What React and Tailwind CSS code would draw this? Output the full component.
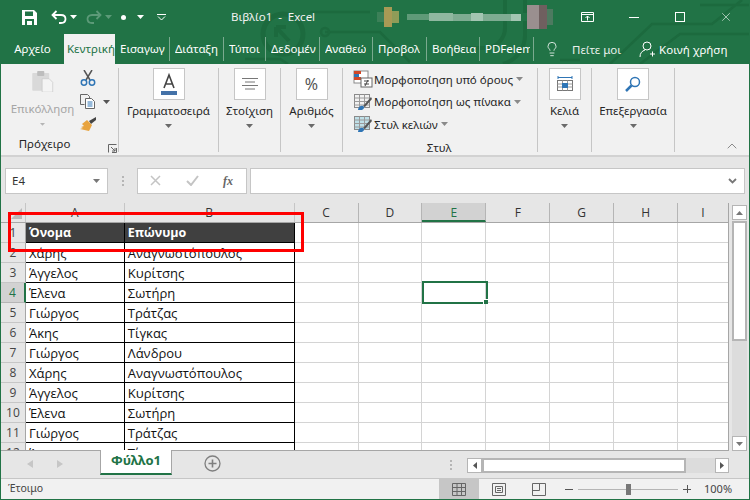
import React from "react";
import { ChevronUp, Lightbulb, X } from "lucide-react";

const rows = [
  ["Όνομα", "Επώνυμο"],
  ["Χάρης", "Αναγνωστόπουλος"],
  ["Άγγελος", "Κυρίτσης"],
  ["Έλενα", "Σωτήρη"],
  ["Γιώργος", "Τράτζας"],
  ["Άκης", "Τίγκας"],
  ["Γιώργος", "Λάνδρου"],
  ["Χάρης", "Αναγνωστόπουλος"],
  ["Άγγελος", "Κυρίτσης"],
  ["Έλενα", "Σωτήρη"],
  ["Γιώργος", "Τράτζας"],
  ["Άκης", "Τίγκας"],
];

const tabs = [
  ["Εισαγωγ", "w-[55px]"],
  ["Διάταξη", "w-[54px]"],
  ["Τύποι", "w-[42px]"],
  ["Δεδομέν", "w-[54px]"],
  ["Αναθεώ", "w-[53px]"],
  ["Προβολ", "w-[54px]"],
  ["Βοήθεια", "w-[53px]"],
  ["PDFelem", "w-[54px]"],
];

const emptyCols = [
  ["C", "w-[64px]"],
  ["D", "w-[64px]"],
  ["E", "w-[64px]"],
  ["F", "w-[64px]"],
  ["G", "w-[64px]"],
  ["H", "w-[64px]"],
  ["I", "w-[50px]"],
];

const mosaic = [
  ["w-[7px] h-[10px]", "bg-[#3c8058]"],
  ["w-[8px] h-[20px]", "bg-[#a89a55]"],
  ["w-[7px] h-[12px]", "bg-[#8f9c58]"],
  ["w-[8px] h-[8px]", "bg-[#217346]"],
  ["w-[22px] h-[6px]", "bg-[#5f9a78]"],
  ["w-[24px] h-[8px]", "bg-[#8fb8a0]"],
  ["w-[18px] h-[7px]", "bg-[#7eac92]"],
  ["w-[12px] h-[8px]", "bg-[#a3c5b2]"],
  ["w-[28px] h-[7px]", "bg-[#7eac92]"],
  ["w-[10px] h-[7px]", "bg-[#a3c5b2]"],
  ["w-[6px] h-[8px]", "bg-[#217346]"],
  ["w-[12px] h-[24px]", "bg-[#9a8f8f]"],
  ["w-[8px] h-[24px]", "bg-[#6f5f5f]"],
  ["w-[6px] h-[16px]", "bg-[#4d7a60]"],
];

const Caret = ({ className = "", color = "#6a6a6a" }) => (
  <svg width="7" height="4" viewBox="0 0 7 4" className={className}>
    <path d="M0 0h7L3.5 4z" fill={color} />
  </svg>
);

const Circuit = () => (
  <svg className="absolute left-0 top-0 pointer-events-none" width="750" height="64" viewBox="0 0 750 64" fill="none" stroke="#1c6a3e" strokeWidth="2.5">
    <circle cx="283" cy="34" r="20" strokeWidth="5" />
    <path d="M276 27l13 14M276 27h10M276 27v10" strokeWidth="4" />
    <path d="M245 59h35l8 5M310 12h60M325 32h55l30 30" />
    <circle cx="325" cy="32" r="4" />
    <path d="M505 0v28a20 20 0 0 1-20 20h-20M525 0v34a30 30 0 0 1-22 30" strokeWidth="4" />
    <path d="M610 64l42-40h60l30-24M640 64l40-30h70M700 5h50M560 60h20" />
  </svg>
);

const BigBtn = ({ children }) => (
  <div className="w-[32px] h-[32px] bg-white border border-[#c6c6c6] flex items-center justify-center">{children}</div>
);

const RibbonGroup = ({ width, label, children }) => (
  <div className={`${width} h-[84px] border-r border-[#c6c6c6] flex flex-col items-center shrink-0`}>
    <BigBtn>{children}</BigBtn>
    <span className="text-[#262626] mt-[3px] leading-[16px]">{label}</span>
    <Caret className="mt-[5px]" />
  </div>
);

const StyleRow = ({ children, label }) => (
  <div className="flex items-center h-[22.5px] shrink-0">
    <span className="w-[20px] h-[18px] mr-[1px] shrink-0">{children}</span>
    <span className="text-[#262626] whitespace-nowrap">{label}</span>
    <Caret className="ml-[3px]" color="#8a8a8a" />
  </div>
);

const GridIcon = ({ fill = "none" }) => (
  <svg width="20" height="18" viewBox="0 0 20 18">
    <rect x="1.5" y="1.5" width="15" height="13" fill={fill} stroke="#8a8a8a" />
    <path d="M1.5 5h15M1.5 8.5h15M1.5 12h15M6.500 1.500v13M11.500 1.500v13" stroke="#9a9a9a" />
    <path d="M18 4l-7 8-1 1 2 1 7-8z" fill="#555" />
    <path d="M5 17c0-3 3-5 5-4 2 1 1 3-1 4z" fill="#2f75b5" />
  </svg>
);

export default function App() {
  return (
    <div className="relative w-[750px] h-[500px] overflow-hidden flex flex-col bg-[#e6e6e6] border-x border-b border-[#217346] font-['Noto_Sans',sans-serif] text-[11.5px]">
      {/* title bar + tabs */}
      <div className="relative -mx-px h-[64px] bg-[#217346] shrink-0 text-white">
        <Circuit />
        <div className="relative h-[34px] flex items-center">
          <svg width="15" height="15" viewBox="0 0 15 15" className="ml-[22px]">
            <path d="M0 0h12l3 3v12H0z" fill="#fff" />
            <rect x="3" y="1.500" width="8" height="4.500" fill="#217346" />
            <rect x="3" y="9" width="9" height="6" fill="#217346" />
            <rect x="5" y="11" width="5" height="4" fill="#fff" />
          </svg>
          <svg width="16" height="14" viewBox="0 0 16 14" fill="none" stroke="#fff" strokeWidth="1.800" className="ml-[14px]">
            <path d="M5.500 1L1.500 5l4 4M1.500 5H10c6 0 6 8 0 8H8" />
          </svg>
          <Caret className="ml-[3px]" color="#fff" />
          <svg width="16" height="14" viewBox="0 0 16 14" fill="none" stroke="#5c9a78" strokeWidth="1.800" className="ml-[9px]">
            <path d="M10.500 1l4 4-4 4M14.500 5H6c-6 0-6 8 0 8h2" />
          </svg>
          <Caret className="ml-[3px]" color="#5c9a78" />
          <span className="w-[5px] h-[5px] rounded-full bg-white ml-[9px]" />
          <Caret className="ml-[11px]" color="#fff" />
          <svg width="9" height="7" viewBox="0 0 9 7" fill="none" stroke="#fff" className="ml-[13px]">
            <path d="M0 .5h9" />
            <path d="M1 2.500l3.500 3.500 3.500-3.500" />
          </svg>
          <span className="ml-[65px] w-[82px] whitespace-pre text-[#f2f2f2]">Βιβλίο1  -  Excel</span>
          <div className="ml-[64px] flex items-center">
            {mosaic.map(([size, color], i) => (
              <span key={i} className={`${size} ${color}`} />
            ))}
          </div>
          <svg width="14" height="11" viewBox="0 0 14 11" fill="none" stroke="#fff" className="ml-[28px]">
            <path d="M.5 .5h12v9H.500zM.5 2.500h12M6.500 8.500V4M4.500 6l2-2 2 2" />
          </svg>
          <span className="w-[10px] h-px bg-white ml-[34px]" />
          <span className="w-[10px] h-[10px] border border-white ml-[36px]" />
          <X size={14} strokeWidth={1} className="ml-[34px]" />
        </div>
        <div className="relative h-[30px] flex items-end pl-[1px]">
          <div className="w-[63px] h-[30px] flex items-center justify-center">Αρχείο</div>
          <div className="w-[51px] h-[30px] bg-[#f1f1f1] text-[#217346] flex items-center pl-[3px] overflow-hidden whitespace-nowrap">Κεντρική</div>
          {tabs.map(([name, width]) => (
            <div key={name} className={`${width} h-[24px] mb-[3px] border-r border-[#7aaa8f] flex items-center pl-[5px] pr-[3px] whitespace-nowrap`}>
              <span className="min-w-0 overflow-hidden">{name}</span>
            </div>
          ))}
          <Lightbulb size={16} strokeWidth={1.200} className="ml-[10px] mb-[7px]" />
          <span className="ml-[12px] mb-[6px] text-[#e8f0eb]">Πείτε μοι</span>
          <svg width="16" height="17" viewBox="0 0 16 17" fill="none" stroke="#fff" className="ml-[18px] mb-[6px]">
            <circle cx="8" cy="5" r="4" />
            <path d="M1 16c0-4 2-6 5-7M11 13h5M13.500 10.500v5" />
          </svg>
          <span className="ml-[4px] mb-[6px] whitespace-nowrap">Κοινή χρήση</span>
        </div>
      </div>

      {/* ribbon */}
      <div className="relative h-[93px] shrink-0 bg-[#f1f1f1] border-b-2 border-[#d2d2d2] flex pt-[4px]">
        <div className="w-[118px] h-[84px] border-r border-[#c6c6c6] relative shrink-0 flex">
          <div className="w-[76px] flex flex-col items-center pt-[3px] pl-[7px]">
            <svg width="29" height="30" viewBox="0 0 29 30">
              <rect x="0" y="3" width="24" height="25" rx="1" fill="#d9d9d9" />
              <rect x="7" y="0" width="10" height="7" rx="1" fill="#bdbdbd" />
              <path d="M14 11h10l5 5v14H14z" fill="#f4f4f4" stroke="#c8c8c8" />
            </svg>
            <span className="text-[#a6a6a6] mt-[9px] leading-[16px]">Επικόλληση</span>
            <Caret className="mt-[6px]" color="#b5b5b5" />
            <span className="text-[#262626] mt-[10px] leading-[16px] pl-[4px] whitespace-nowrap">Πρόχειρο</span>
          </div>
          <div className="flex flex-col pt-[2px] pl-[3px]">
            <svg width="16" height="16" viewBox="0 0 16 16" fill="none">
              <path d="M4 0l6 10M12 0L6 10" stroke="#555" strokeWidth="1.500" />
              <circle cx="4" cy="12.500" r="2.700" stroke="#2f75b5" strokeWidth="1.500" />
              <circle cx="12" cy="12.500" r="2.700" stroke="#2f75b5" strokeWidth="1.500" />
            </svg>
            <div className="flex items-center mt-[8px]">
              <svg width="16" height="15" viewBox="0 0 16 15" fill="none">
                <path d="M.5 .5h7l2 2v3M.5 .5v10h4" stroke="#666" />
                <path d="M5.500 4.500h6l3 3v7h-9z" fill="#fff" stroke="#666" />
                <path d="M7.500 8h5M7.500 10h5M7.500 12h5" stroke="#2f75b5" />
              </svg>
              <Caret className="ml-[7px]" color="#555" />
            </div>
            <svg width="16" height="15" viewBox="0 0 16 15" className="mt-[8px]">
              <path d="M9 4l7-4v3l-5 4z" fill="#444" />
              <path d="M7 3l5 5-3 6-9-2 3-1-2-1 3-1-2-2z" fill="#e8a33d" />
            </svg>
          </div>
          <svg width="9" height="9" viewBox="0 0 9 9" fill="none" stroke="#666" className="absolute left-[107px] top-[76px]">
            <path d="M.5 8.500v-8h8M8.500 4v4.500H4M3 3l4 4M7 4v3H4" />
          </svg>
        </div>

        <RibbonGroup width="w-[100px]" label="Γραμματοσειρά">
          <svg width="18" height="24" viewBox="0 0 18 24">
            <rect x="1" y="19" width="16" height="4" fill="#4472a8" />
            <path d="M4 16L9 3l5 13M5.500 12h7" fill="none" stroke="#444" strokeWidth="1.600" />
          </svg>
        </RibbonGroup>
        <RibbonGroup width="w-[62px]" label="Στοίχιση">
          <svg width="16" height="12" viewBox="0 0 16 12" stroke="#777">
            <path d="M0 .5h16M3 4h10M0 7.500h16M3 11h10" />
          </svg>
        </RibbonGroup>
        <RibbonGroup width="w-[62px]" label="Αριθμός">
          <span className="text-[16px] text-[#555] leading-none">%</span>
        </RibbonGroup>

        <div className="w-[195px] h-[84px] border-r border-[#c6c6c6] shrink-0 flex flex-col pl-[10px]">
          <StyleRow label="Μορφοποίηση υπό όρους">
            <svg width="20" height="18" viewBox="0 0 20 18">
              <rect x="1" y="1" width="14" height="12" fill="#fff" stroke="#8a8a8a" />
              <rect x="1" y="1" width="7" height="3" fill="#d24726" />
              <rect x="1" y="4" width="5" height="3" fill="#2f75b5" />
              <rect x="1" y="7" width="7" height="3" fill="#d24726" />
              <rect x="8" y="8" width="11" height="9" fill="#fff" stroke="#666" />
              <path d="M11 11h5M11 14h5M15 10l-3 6" stroke="#444" fill="none" />
            </svg>
          </StyleRow>
          <StyleRow label="Μορφοποίηση ως πίνακα">
            <GridIcon />
          </StyleRow>
          <StyleRow label="Στυλ κελιών">
            <GridIcon fill="#bfe0e8" />
          </StyleRow>
          <span className="text-[#262626] text-center leading-[16px] mt-[4px] pr-[12px]">Στυλ</span>
        </div>

        <RibbonGroup width="w-[54px]" label="Κελιά">
          <svg width="16" height="17" viewBox="0 0 16 17" fill="none">
            <path d="M1 1.500h14" stroke="#2f75b5" />
            <path d="M1 0v3M15 0v3" stroke="#2f75b5" />
            <rect x=".5" y="4.500" width="15" height="10" fill="#fff" stroke="#777" />
            <path d="M.5 8h15M.5 11h15M5.500 4.500v10M10.500 4.500v10" stroke="#999" />
            <rect x="5" y="7" width="6" height="5" fill="#2f75b5" />
          </svg>
        </RibbonGroup>
        <RibbonGroup width="w-[83px]" label="Επεξεργασία">
          <svg width="16" height="16" viewBox="0 0 16 16" fill="none" stroke="#2f75b5">
            <circle cx="10" cy="6" r="4.500" strokeWidth="1.500" />
            <path d="M6.500 9.500L1 15" strokeWidth="2.500" />
          </svg>
        </RibbonGroup>
        <ChevronUp size={16} strokeWidth={1} className="absolute right-[9px] bottom-[1px] text-[#555]" />
      </div>

      {/* formula bar */}
      <div className="h-[46px] shrink-0 flex items-center pl-[4px] pr-[4px] pt-[1px]">
        <div className="w-[103px] h-[26px] bg-white border border-[#c6c6c6] flex items-center justify-between pl-[6px] pr-[7px] text-[#333]">
          <span>E4</span>
          <Caret color="#777" />
        </div>
        <div className="w-[29px] flex flex-col items-center gap-[2px]">
          <span className="w-[2px] h-[2px] bg-[#b5b5b5]" />
          <span className="w-[2px] h-[2px] bg-[#b5b5b5]" />
          <span className="w-[2px] h-[2px] bg-[#b5b5b5]" />
        </div>
        <div className="w-[110px] h-[26px] bg-white border border-[#c6c6c6] flex items-center pl-[12px]">
          <svg width="11" height="11" viewBox="0 0 11 11" stroke="#c4c4c4" strokeWidth="1.500"><path d="M1 1l9 9M10 1l-9 9" /></svg>
          <svg width="13" height="11" viewBox="0 0 13 11" stroke="#c4c4c4" strokeWidth="2" fill="none" className="ml-[25px]"><path d="M1 6l4 4 7-9" /></svg>
          <span className="ml-[24px] font-['Liberation_Serif',serif] italic text-[12px] text-[#666] font-bold">fx</span>
        </div>
        <div className="ml-[3px] flex-1 h-[26px] bg-white border border-[#c6c6c6] flex items-center justify-end pr-[7px]">
          <svg width="9" height="6" viewBox="0 0 9 6" fill="none" stroke="#777" strokeWidth="1.800"><path d="M1 1l3.500 3.500L8 1" /></svg>
        </div>
      </div>

      {/* sheet */}
      <div className="h-[248px] shrink-0 flex">
        <div className="w-[728px] border-r border-b border-[#a6a6a6] overflow-hidden bg-white text-[13px] font-['Open_Sans',sans-serif]">
          <div className="flex h-[20px] bg-[#e6e6e6] border-b border-[#a6a6a6] text-[#333] text-[12px] leading-[19px]">
            <div className="w-[25px] border-r border-[#c6c6c6] flex items-end justify-end pr-[3px] pb-[3px]">
              <svg width="11" height="11" viewBox="0 0 11 11"><path d="M11 0v11H0z" fill="#b9b9b9" /></svg>
            </div>
            <div className="w-[99px] border-r border-[#c6c6c6] text-center">A</div>
            <div className="w-[170px] border-r border-[#c6c6c6] text-center">B</div>
            {emptyCols.map(([col, width]) => (
              <div key={col} className={`${width} text-center ${col === "I" ? "" : "border-r border-[#b5b5b5]"} ${col === "E" ? "bg-[#d2d2d2] text-[#217346] border-b-2 border-b-[#217346]" : ""}`}>
                {col}
              </div>
            ))}
          </div>
          {rows.map(([first, last], i) => {
            const head = i === 0;
            return (
              <div key={i} className="flex h-[20px]">
                <div className={`w-[25px] border-b border-r text-[12px] text-center leading-[19px] ${i === 3 ? "bg-[#d2d2d2] text-[#217346] border-r-2 border-r-[#217346] border-b-[#b5b5b5]" : "bg-[#e6e6e6] text-[#444] border-b-[#c6c6c6] border-r-[#a6a6a6]"}`}>
                  {i + 1}
                </div>
                <div className={`w-[99px] border-r border-b border-black pl-[3px] leading-[20px] whitespace-nowrap ${head ? "bg-[#404040] text-white font-bold text-[12.5px]" : "text-[#111]"}`}>{first}</div>
                <div className={`w-[170px] border-r border-b border-black pl-[3px] leading-[20px] whitespace-nowrap ${head ? "bg-[#404040] text-white font-bold text-[12.5px]" : "text-[#111]"}`}>{last}</div>
                {emptyCols.map(([col, width]) => (
                  <div key={col} className={`${width} border-b border-[#d4d4d4] ${col === "I" ? "" : "border-r"}`} />
                ))}
              </div>
            );
          })}
        </div>
        <div className="ml-[3px] w-[15px] flex flex-col">
          <div className="h-[15px] mt-[2px] bg-white border border-[#b5b5b5] flex items-center justify-center">
            <svg width="7" height="4" viewBox="0 0 7 4"><path d="M0 4h7L3.500 0z" fill="#777" /></svg>
          </div>
          <div className="h-[120px] mt-px bg-white border-2 border-[#b5b5b5]" />
          <div className="flex-1 bg-[#dcdcdc]" />
          <div className="h-[15px] bg-white border border-[#b5b5b5] flex items-center justify-center">
            <Caret color="#777" />
          </div>
        </div>
      </div>

      {/* sheet tabs */}
      <div className="relative h-[28px] shrink-0 flex items-start border-b border-[#c6c6c6]">
        <svg width="6" height="8" viewBox="0 0 6 8" className="ml-[26px] mt-[9px]"><path d="M6 0v8L0 4z" fill="#c6c6c6" /></svg>
        <svg width="6" height="8" viewBox="0 0 6 8" className="ml-[24px] mt-[9px]"><path d="M0 0v8l6-4z" fill="#c6c6c6" /></svg>
        <div className="ml-[37px] w-[72px] h-[25px] -mt-px bg-white border-x border-[#a6a6a6] border-b-2 border-b-[#217346] text-[#217346] font-bold text-[13px] leading-[21px] text-center">Φύλλο1</div>
        <svg width="17" height="17" viewBox="0 0 17 17" fill="none" stroke="#7f7f7f" className="ml-[32px] mt-[4px]">
          <circle cx="8.500" cy="8.500" r="7.500" strokeWidth="1.300" />
          <path d="M8.500 4.500v8M4.500 8.500h8" strokeWidth="1.600" />
        </svg>
        <div className="ml-[229px] mt-[9px] flex flex-col gap-[2px]">
          <span className="w-[2px] h-[2px] bg-[#b5b5b5]" />
          <span className="w-[2px] h-[2px] bg-[#b5b5b5]" />
          <span className="w-[2px] h-[2px] bg-[#b5b5b5]" />
        </div>
        <div className="ml-[15px] mt-[7px] w-[262px] h-[15px] flex">
          <div className="w-[15px] bg-white border border-[#b5b5b5] flex items-center justify-center">
            <svg width="4" height="7" viewBox="0 0 4 7"><path d="M4 0v7L0 3.500z" fill="#555" /></svg>
          </div>
          <div className="w-[204px] bg-white border-2 border-[#b5b5b5]" />
          <div className="flex-1 bg-[#dcdcdc]" />
          <div className="w-[14px] bg-white border border-[#b5b5b5] flex items-center justify-center">
            <svg width="4" height="7" viewBox="0 0 4 7"><path d="M0 0v7l4-3.500z" fill="#555" /></svg>
          </div>
        </div>
      </div>

      {/* status bar */}
      <div className="flex-1 bg-[#f1f1f1] flex items-center text-[10.5px] text-[#444]">
        <span className="ml-[7px] w-[431px]">Έτοιμο</span>
        <div className="w-[40px] h-[20px] bg-[#c6c6c6] flex items-center justify-center">
          <svg width="14" height="13" viewBox="0 0 14 13" fill="none" stroke="#666"><path d="M.5 .5h13v12H.500zM.5 4.500h13M.5 8.500h13M5 .5v12M9.500 .5v12" /></svg>
        </div>
        <svg width="14" height="13" viewBox="0 0 14 13" fill="none" stroke="#666" className="ml-[13px]"><path d="M.5 .5h13v12H.500z" /><path d="M3.500 3.500h7v6h-7zM5 5.500h4M5 7.500h4" /></svg>
        <svg width="14" height="13" viewBox="0 0 14 13" fill="none" stroke="#666" className="ml-[26px]"><path d="M.5 .5h13v12H.500zM.5 7.500h7V.5" /></svg>
        <span className="ml-[19px] w-[8px] h-px bg-[#555]" />
        <div className="relative ml-[5px] w-[100px] h-px bg-[#b5b5b5]">
          <span className="absolute left-[48px] -top-[5px] w-[5px] h-[11px] bg-[#777]" />
        </div>
        <span className="relative ml-[5px] w-[8px] h-px bg-[#555]">
          <span className="absolute left-[3.500px] -top-[3.500px] w-px h-[8px] bg-[#555]" />
        </span>
        <span className="ml-[13px] text-[11px] text-[#444]">100%</span>
      </div>

      {/* selected cell E4 */}
      <div className="absolute left-[421px] top-[281px] w-[66px] h-[23px] border-2 border-[#217346]">
        <span className="absolute -right-[2px] -bottom-[2px] w-[5px] h-[5px] bg-[#217346] border-t border-l border-white" />
      </div>
      {/* red annotation */}
      <div className="absolute left-[7px] top-[212px] w-[296px] h-[40px] border-[3px] border-[#fe0000]" />
    </div>
  );
}
